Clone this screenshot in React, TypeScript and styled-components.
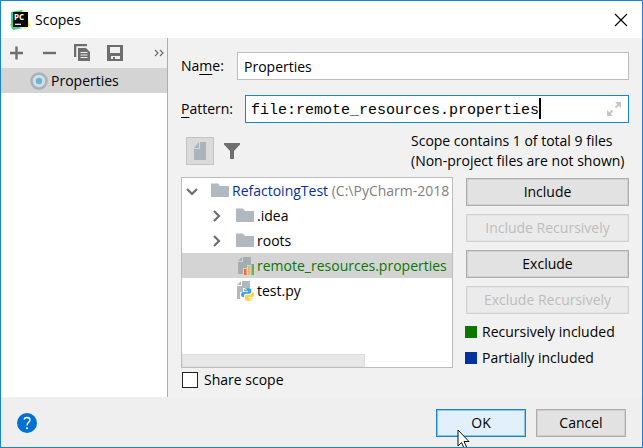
import React, { useState } from "react";
import styled, { createGlobalStyle } from "styled-components";

const blue = "#1883d7";

const GlobalStyle = createGlobalStyle`
  * { box-sizing: border-box; }
  body { margin: 0; }
  body, button, input { font: 14px/20px "Open Sans", "Noto Sans", sans-serif; color: #000; }
  svg { display: block; flex: none; }
`;

const Dialog = styled.div`
  position: relative;
  display: flex;
  flex-direction: column;
  min-height: 100vh;
  border: 1px solid ${blue};
  background: #f1f1f1;
  overflow: hidden;
`;

const TitleBar = styled.header`
  display: flex;
  align-items: center;
  gap: 5px;
  height: 37px;
  padding: 0 14px 0 9px;
  background: #fff;
`;

const Title = styled.h1`
  flex: 1;
  margin: 0;
  font-size: 14px;
  font-weight: 400;
`;

const IconButton = styled.button`
  display: flex;
  padding: 0;
  border: 0;
  background: none;
`;

const Body = styled.div`
  display: flex;
  flex: 1;
`;

const Sidebar = styled.aside`
  display: flex;
  flex-direction: column;
  width: 167px;
  border-right: 1px solid #adadad;
  background: #fff;
`;

const Toolbar = styled.div`
  display: flex;
  align-items: center;
  gap: 16px;
  height: 30px;
  padding: 0 3px 0 7px;
  background: #f1f1f1;

  & > :last-child { margin-left: auto; }
`;

const ScopeItem = styled.button`
  display: flex;
  align-items: center;
  gap: 3px;
  height: 25px;
  padding: 0 0 0 29px;
  border: 0;
  background: #d4d4d4;
`;

const Main = styled.main`
  display: flex;
  flex: 1;
  flex-direction: column;
  min-width: 0;
  padding: 14px 13px 7px;
`;

const Field = styled.div`
  display: flex;
  align-items: center;

  & + & { margin-top: 15px; }
`;

const FieldLabel = styled.label<{ $width: number }>`
  width: ${(p) => p.$width}px;
  flex: none;
`;

const Mnemonic = styled.span`
  text-decoration: underline;
  text-underline-offset: 3px;
`;

const TextInput = styled.input`
  flex: 1;
  min-width: 0;
  height: 28px;
  padding: 0 6px;
  border: 1px solid #bdbdbd;
  background: #fff;
  outline: 0;
`;

const PatternBox = styled.div`
  position: relative;
  display: flex;
  align-items: center;
  flex: 1;
  height: 28px;
  padding: 0 5px;
  border: 1px solid ${blue};
  background: #fff;
  font: 15px/20px "Liberation Mono", monospace;
`;

const PatternInput = styled.input`
  flex: 1;
  min-width: 0;
  padding: 4px 0 0;
  border: 0;
  outline: 0;
  background: none;
  font: inherit;
`;

const Caret = styled.span<{ $column: number }>`
  position: absolute;
  top: 2px;
  left: calc(5px + ${(p) => p.$column}ch);
  width: 2px;
  height: 21px;
  background: #000;
`;

const FilterRow = styled.div`
  display: flex;
  align-items: center;
  gap: 10px;
  height: 38px;
  margin: 9px 0 7px;
  padding-left: 5px;
`;

const ToggleButton = styled.button`
  display: flex;
  align-items: center;
  justify-content: center;
  width: 28px;
  height: 28px;
  padding: 0;
  border: 1px solid #c4c4c4;
  background: #dadada;
`;

const Summary = styled.p`
  margin: 0 0 0 auto;
  width: 218px;
  white-space: nowrap;
`;

const Columns = styled.div`
  display: flex;
  flex: 1;
  gap: 13px;
`;

const Tree = styled.div`
  display: flex;
  flex: 1;
  flex-direction: column;
  min-width: 0;
  min-height: 191px;
  border: 1px solid #bcbcbc;
  background: #fff;
  overflow: hidden;
`;

const TreeRow = styled.div<{ $depth: number; $selected?: boolean; $color?: string }>`
  display: flex;
  align-items: center;
  gap: 3px;
  height: 25px;
  flex: none;
  padding-left: ${(p) => 2 + p.$depth * 25}px;
  background: ${(p) => (p.$selected ? "#d4d4d4" : "none")};
  color: ${(p) => p.$color ?? "#000"};
  white-space: nowrap;
`;

const Arrow = styled.span`
  display: flex;
  flex: none;
  width: 24px;
`;

const Path = styled.span`
  color: #808080;
`;

const ScrollThumb = styled.div`
  width: 183px;
  height: 13px;
  margin-top: auto;
  border: 1px solid #dedede;
  background: #e8e8e8;
`;

const Actions = styled.div`
  display: flex;
  flex-direction: column;
  width: 163px;
  padding-top: 1px;
`;

const PushButton = styled.button<{ $primary?: boolean }>`
  position: relative;
  height: 28px;
  padding: 0;
  border: 1px solid ${(p) => (p.$primary ? blue : "#adadad")};
  background: ${(p) => (p.$primary ? "#e1f0fa" : "#e2e2e2")};
  box-shadow: inset 0 0 0 1px ${(p) => (p.$primary ? "#8ac5f1" : "#cfcfcf")};

  &:disabled {
    border-color: #d2d2d2;
    background: #ebebeb;
    box-shadow: inset 0 0 0 1px #e2e2e2;
    color: #bdbdbd;
  }
`;

const ButtonStack = styled.div`
  display: grid;
  gap: 8px;
  margin-bottom: 8px;
`;

const LegendList = styled.div`
  display: grid;
  gap: 6px;
  margin-left: -1px;
`;

const Legend = styled.div<{ $color: string }>`
  display: flex;
  align-items: center;
  gap: 5px;
  white-space: nowrap;

  &::before {
    content: "";
    width: 12px;
    height: 12px;
    background: ${(p) => p.$color};
  }
`;

const ShareLabel = styled.label`
  display: flex;
  align-items: center;
  gap: 6px;
  align-self: flex-start;
  margin: 2px 0 0 1px;
`;

const CheckBox = styled.input`
  appearance: none;
  width: 16px;
  height: 16px;
  margin: 0;
  border: 1px solid #222;
  background: #fff;

  &:checked { background: #222; box-shadow: inset 0 0 0 3px #fff; }
`;

const Footer = styled.footer`
  display: flex;
  align-items: center;
  gap: 10px;
  height: 50px;
  padding: 2px 16px 0;
  background: #efefef;
`;

const HelpButton = styled(IconButton)`
  margin-right: auto;
`;

const FooterButton = styled(PushButton)`
  width: 90px;
`;

const Pointer = styled.svg`
  position: absolute;
  top: 19px;
  left: 20px;
`;

const LogoText = styled.text`
  font: 700 8px "Open Sans", sans-serif;
  fill: #fff;
`;

const AppIcon = () => (
  <svg width="20" height="20" viewBox="0 0 20 20">
    <path d="M1 2 12 0 14 5 4 20 1 17Z" fill="#21d789" />
    <path d="M12 0 18 3 17 7 20 15 15 19 11 16Z" fill="#f5ee55" />
    <path d="M0 14 5 16 13 18 3 20Z" fill="#41cf92" />
    <rect x="3" y="2" width="15" height="15" fill="#080808" />
    <LogoText x="4" y="10">PC</LogoText>
    <path d="M5 14.3H11" stroke="#fff" strokeWidth="1.2" />
  </svg>
);

const Chevron = ({ open }: { open?: boolean }) => (
  <svg width="16" height="16" viewBox="0 0 16 16" fill="none" stroke="#6e6e6e" strokeWidth="2.2">
    <path d={open ? "M3 6 8 11 13 6" : "M5 3 10 8 5 13"} />
  </svg>
);

const Folder = () => (
  <svg width="18" height="16" viewBox="0 0 18 16">
    <path d="M0 0.5H7L9 3H18V14H0Z" fill="#afb9bf" />
  </svg>
);

const PropertiesFile = () => (
  <svg width="18" height="20" viewBox="0 0 18 20">
    <path d="M7 1H15V9H11V12H7V18H2V6H7Z" fill="#a4adb3" />
    <path d="M6 1V5H2Z" fill="#a4adb3" />
    <path d="M8 13H10.5V19H8Z" fill="#f26b36" />
    <path d="M12 10H14.3V19H12Z" fill="#efb65d" />
    <path d="M15.5 8H18V19H15.5Z" fill="#67b552" />
  </svg>
);

const PythonFile = () => (
  <svg width="18" height="20" viewBox="0 0 18 20">
    <path d="M6 0H14V7H7V11H4V18H1V5H6Z" fill="#afb9bf" />
    <path d="M5 0V4H1Z" fill="#afb9bf" />
    <path d="M12 7C9 7 8.2 7.9 8.2 9.2V10.2H12V11H7.3C5.5 11 5 12.5 5 13.8 5 15.5 6 16 7.2 16H8V14.5C8 13.5 9 12.7 10 12.7H13.4C14.6 12.7 15.3 12 15.3 11V9C15.3 7.7 14 7 12 7Z" fill="#40a4d8" />
    <path d="M12.2 20C15 20 15.5 19 15.5 18V17H12.2V16.2H16C17.8 16.2 18 14.5 18 13.2 18 11.5 17.4 10.8 16.2 10.8V12.1C16.2 13.2 15.2 13.8 14.2 13.8H10.8C9.6 13.8 9 14.7 9 15.5V17.8C9 19.1 10.5 20 12.2 20Z" fill="#ffd43b" />
    <circle cx="10" cy="8.8" r=".7" fill="#fff" />
    <circle cx="14" cy="18.2" r=".7" fill="#fff" />
  </svg>
);

export default function App() {
  const [name, setName] = useState("Properties");
  const [pattern, setPattern] = useState("file:remote_resources.properties");

  return (
    <>
      <GlobalStyle />
      <Dialog role="dialog" aria-label="Scopes">
        <TitleBar>
          <AppIcon />
          <Title>Scopes</Title>
          <IconButton aria-label="Close">
            <svg width="14" height="14" viewBox="0 0 14 14" stroke="#000" strokeWidth="1.1">
              <path d="M1 1 13 13M13 1 1 13" />
            </svg>
          </IconButton>
        </TitleBar>
        <Body>
          <Sidebar>
            <Toolbar>
              <IconButton aria-label="Add">
                <svg width="17" height="18" viewBox="0 0 17 18" stroke="#6e6e6e" strokeWidth="2.4">
                  <path d="M2 9H15M8.5 2.5V15.5" />
                </svg>
              </IconButton>
              <IconButton aria-label="Remove">
                <svg width="17" height="18" viewBox="0 0 17 18" stroke="#6e6e6e" strokeWidth="2.4">
                  <path d="M2 9H15" />
                </svg>
              </IconButton>
              <IconButton aria-label="Copy">
                <svg width="17" height="18" viewBox="0 0 17 18">
                  <path d="M0 0H13V2.3H2.3V13H0Z" fill="#6e6e6e" />
                  <path d="M4 4H12L16 8V17H4Z" fill="#6e6e6e" />
                  <path d="M6.5 8.5H13.5M6.5 11H13.5M6.5 13.5H13.5" stroke="#f1f1f1" />
                </svg>
              </IconButton>
              <IconButton aria-label="Save">
                <svg width="17" height="18" viewBox="0 0 17 18">
                  <path fillRule="evenodd" d="M0 1H16V17H0ZM3 3V9H13V3ZM4 12V15H6V13H8V15H13V12Z" fill="#6e6e6e" />
                </svg>
              </IconButton>
              <IconButton aria-label="More">
                <svg width="10" height="18" viewBox="0 0 10 18" fill="none" stroke="#6e6e6e" strokeWidth="1.2">
                  <path d="M1 6 4 9 1 12M6 6 9 9 6 12" />
                </svg>
              </IconButton>
            </Toolbar>
            <ScopeItem>
              <svg width="18" height="18" viewBox="0 0 18 18">
                <circle cx="9" cy="9" r="7.5" fill="#d8dcde" stroke="#a6b1b8" strokeWidth="2.5" />
                <circle cx="9" cy="9" r="3.2" fill="#62b8d9" />
              </svg>
              Properties
            </ScopeItem>
          </Sidebar>
          <Main>
            <Field>
              <FieldLabel htmlFor="name" $width={56}>
                Na<Mnemonic>m</Mnemonic>e:
              </FieldLabel>
              <TextInput id="name" value={name} onChange={(e) => setName(e.target.value)} />
            </Field>
            <Field>
              <FieldLabel htmlFor="pattern" $width={64}>
                <Mnemonic>P</Mnemonic>attern:
              </FieldLabel>
              <PatternBox>
                <PatternInput id="pattern" value={pattern} onChange={(e) => setPattern(e.target.value)} />
                <Caret $column={pattern.length} />
                <IconButton aria-label="Expand">
                  <svg width="17" height="18" viewBox="0 0 17 18" fill="#c3c7c9" stroke="#c3c7c9">
                    <path d="M9 2H15V8Z M1 10V16H7Z" stroke="none" />
                    <path d="M9.5 7.5 13 4M3 14 6.5 10.5" strokeWidth="2" />
                  </svg>
                </IconButton>
              </PatternBox>
            </Field>
            <FilterRow>
              <ToggleButton aria-label="Show files" aria-pressed="true">
                <svg width="14" height="20" viewBox="0 0 14 20" fill="#a9b5bc">
                  <path d="M7 1H13V19H1V8H7ZM6 1V7H1Z" />
                </svg>
              </ToggleButton>
              <IconButton aria-label="Filter">
                <svg width="16" height="16" viewBox="0 0 16 16" fill="#6e6e6e">
                  <path d="M0 0H16V1.5L10 8V16H6V8L0 1.5Z" />
                </svg>
              </IconButton>
              <Summary>
                Scope contains 1 of total 9 files
                <br />
                (Non-project files are not shown)
              </Summary>
            </FilterRow>
            <Columns>
              <Tree role="tree">
                <TreeRow $depth={0} $color="#0032a0" role="treeitem">
                  <Arrow><Chevron open /></Arrow>
                  <Folder />
                  <span>RefactoingTest <Path>(C:\PyCharm-2018</Path></span>
                </TreeRow>
                <TreeRow $depth={1} role="treeitem">
                  <Arrow><Chevron /></Arrow>
                  <Folder />.idea
                </TreeRow>
                <TreeRow $depth={1} role="treeitem">
                  <Arrow><Chevron /></Arrow>
                  <Folder />roots
                </TreeRow>
                <TreeRow $depth={1} $selected $color="#0a7700" role="treeitem">
                  <Arrow />
                  <PropertiesFile />remote_resources.properties
                </TreeRow>
                <TreeRow $depth={1} role="treeitem">
                  <Arrow />
                  <PythonFile />test.py
                </TreeRow>
                <ScrollThumb />
              </Tree>
              <Actions>
                <ButtonStack>
                  <PushButton>Include</PushButton>
                  <PushButton disabled>Include Recursively</PushButton>
                  <PushButton>Exclude</PushButton>
                  <PushButton disabled>Exclude Recursively</PushButton>
                </ButtonStack>
                <LegendList>
                  <Legend $color="#0a7700">Recursively included</Legend>
                  <Legend $color="#0032a0">Partially included</Legend>
                </LegendList>
              </Actions>
            </Columns>
            <ShareLabel>
              <CheckBox type="checkbox" />
              Share scope
            </ShareLabel>
          </Main>
        </Body>
        <Footer>
          <HelpButton aria-label="Help">
            <svg width="20" height="20" viewBox="0 0 20 20">
              <circle cx="10" cy="10" r="10" fill="#0070d2" />
              <path d="M7 6.5Q7.5 4.5 10 4.5 13 4.5 13 7 13 8.5 11.3 9.6 10 10.5 10 12.5" fill="none" stroke="#fff" strokeWidth="1.3" />
              <circle cx="10" cy="15.2" r="1" fill="#fff" />
            </svg>
          </HelpButton>
          <FooterButton $primary>
            OK
            <Pointer width="13" height="20" viewBox="0 0 13 20" aria-hidden="true">
              <path d="M1 1V17L4.5 13.5 7 19 9.5 18 7 12.5H12Z" fill="#fff" stroke="#111" />
            </Pointer>
          </FooterButton>
          <FooterButton>Cancel</FooterButton>
        </Footer>
      </Dialog>
    </>
  );
}
